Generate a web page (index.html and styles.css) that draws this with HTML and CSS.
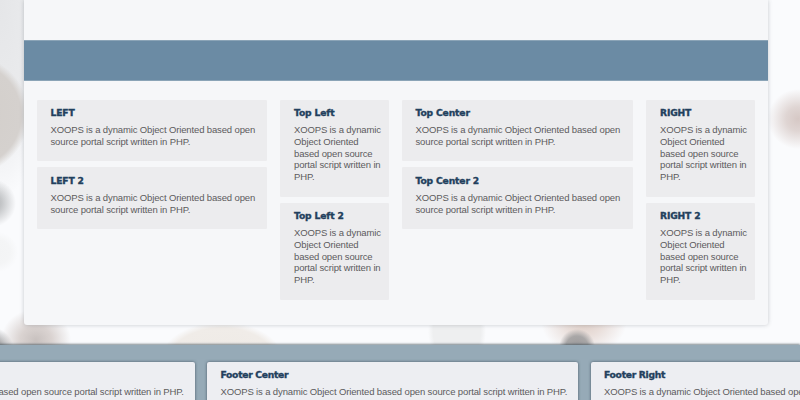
FILE: index.html
```html
<!DOCTYPE html>
<html lang="en">
<head>
<meta charset="utf-8">
<title>XOOPS</title>
<link rel="stylesheet" href="styles.css">
</head>
<body>
<main class="page">
  <div class="banner"></div>
  <div class="columns">
    <section class="column">
      <article class="block"><h2>LEFT</h2><p>XOOPS is a dynamic Object Oriented based open source portal script written in PHP.</p></article>
      <article class="block"><h2>LEFT 2</h2><p>XOOPS is a dynamic Object Oriented based open source portal script written in PHP.</p></article>
    </section>
    <section class="column">
      <article class="block narrow"><h2>Top Left</h2><p>XOOPS is a dynamic Object Oriented based open source portal script written in PHP.</p></article>
      <article class="block narrow"><h2>Top Left 2</h2><p>XOOPS is a dynamic Object Oriented based open source portal script written in PHP.</p></article>
    </section>
    <section class="column">
      <article class="block"><h2>Top Center</h2><p>XOOPS is a dynamic Object Oriented based open source portal script written in PHP.</p></article>
      <article class="block"><h2>Top Center 2</h2><p>XOOPS is a dynamic Object Oriented based open source portal script written in PHP.</p></article>
    </section>
    <section class="column">
      <article class="block narrow"><h2>RIGHT</h2><p>XOOPS is a dynamic Object Oriented based open source portal script written in PHP.</p></article>
      <article class="block narrow"><h2>RIGHT 2</h2><p>XOOPS is a dynamic Object Oriented based open source portal script written in PHP.</p></article>
    </section>
  </div>
</main>
<footer class="footer">
  <article class="footer-block"><p class="first">XOOPS is a dynamic Object Oriented based open source portal script written in PHP.</p></article>
  <article class="footer-block"><h2>Footer Center</h2><p>XOOPS is a dynamic Object Oriented based open source portal script written in PHP.</p></article>
  <article class="footer-block"><h2>Footer Right</h2><p>XOOPS is a dynamic Object Oriented based open source portal script written in PHP.</p></article>
</footer>
</body>
</html>
```
FILE: styles.css
```css
* { box-sizing: border-box; }

body {
  margin: 0;
  height: 400px;
  overflow: hidden;
  font: 9.5px/11.8px "Liberation Sans", Arial, sans-serif;
  letter-spacing: -0.135px;
  color: #5c5b5d;
  background:
    radial-gradient(circle at -31px 115px, #d2ceca 0, #d5d1ce 52px, rgba(213, 209, 206, 0) 60px),
    radial-gradient(circle at -8px 203px, #a9abad 0, rgba(185, 187, 189, .8) 10px, rgba(230, 230, 231, 0) 24px),
    radial-gradient(circle at -2px 252px, #f3f4f5 0, #f4f5f6 12px, rgba(244, 245, 246, 0) 20px),
    radial-gradient(circle at 798px 119px, #d6c8c5 0, #dfd5d3 12px, rgba(249, 250, 252, 0) 30px),
    radial-gradient(circle at 577px 347px, #9c9a9b 0, #a9a7a7 11px, rgba(180, 176, 175, 0) 18px),
    radial-gradient(ellipse 48px 40px at 584px 320px, #ddcdc5 0, #e9deda 40%, rgba(249, 250, 252, 0) 90%),
    radial-gradient(circle at -9px 350px, #969798 0, #b0b0b1 12px, rgba(210, 208, 208, 0) 23px),
    radial-gradient(ellipse 35px 31px at 36px 340px, #c8c1bf 0, #dad3d1 45%, rgba(249, 250, 252, 0) 100%),
    radial-gradient(ellipse 62px 39px at 222px 361px, #eeeae5 0, #f0ece8 85%, rgba(249, 250, 252, 0) 100%),
    radial-gradient(ellipse 29px 40px at 457px 331px, #eeeff0 0, #eeeff0 82%, rgba(249, 250, 252, 0) 100%),
    radial-gradient(ellipse 54px 200px at 0 0, #e5e6e8 0, #eaebed 60%, rgba(249, 250, 252, 0) 100%),
    #fafbfd;
}

.page {
  width: 744px;
  height: 325px;
  margin: 0 0 20px 24px;
  padding-top: 40px;
  background: #f6f7f9;
  border-radius: 0 0 3px 3px;
  box-shadow: 0 0 4px rgba(70, 75, 85, .28);
}

.banner {
  height: 41px;
  background: #6b8ba4;
  border: solid #8ba4b7;
  border-width: 1px 0;
}

.columns {
  display: grid;
  grid-template-columns: 230px 109px 231px 109px;
  column-gap: 13px;
  align-items: start;
  padding: 19px 13px 0;
}

.column {
  display: grid;
  row-gap: 6px;
}

.block {
  height: 61.4px;
  padding: 7px 5px 0 13.5px;
  background: #ececee;
  border-radius: 1px;
}

.block:not(.narrow) + .block { padding-top: 7.6px; }

.narrow {
  height: 97px;
  padding-left: 14px;
}

h2 {
  margin: 0 0 5px;
  font: bold 9.2px/12px "DejaVu Sans", sans-serif;
  letter-spacing: -0.15px;
  -webkit-text-stroke: 0.35px #22405d;
  color: #22405d;
}

p { margin: 0; }

.footer {
  display: grid;
  grid-template-columns: repeat(3, 371px);
  column-gap: 12.5px;
  height: 55px;
  margin-left: -176.5px;
  padding-top: 16.5px;
  background: #96aab7;
  box-shadow: 0 -1px 2px rgba(60, 75, 85, .65);
}

.footer-block {
  height: 60px;
  padding: 7.3px 5px 0 13.5px;
  background: #edeef2;
  border-radius: 2px;
  box-shadow: 0 0 3px rgba(35, 50, 65, .7);
  white-space: nowrap;
}

.footer-block h2 { letter-spacing: -0.3px; }

.first { margin-top: 17px; }
```
